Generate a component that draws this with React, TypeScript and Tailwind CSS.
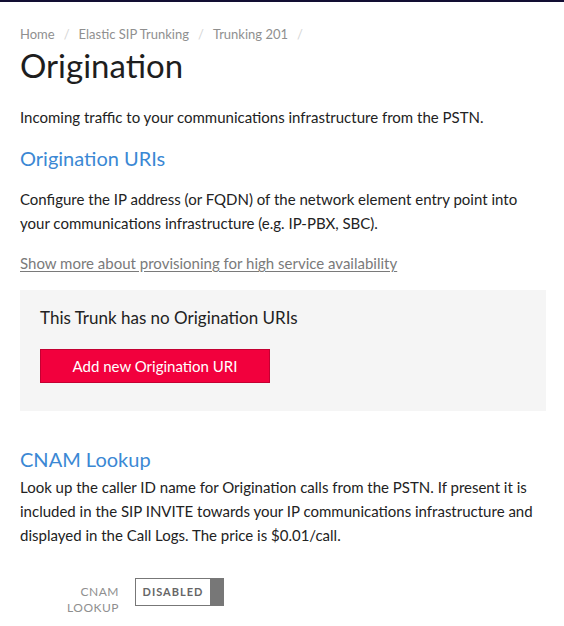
export default function App() {
  const crumbs = ['Home', 'Elastic SIP Trunking', 'Trunking 201']
  return (
    <div className="min-h-[626px] bg-white border-t-2 border-[#120e33] text-[#222] font-['Lato','Open_Sans',sans-serif]">
      <div className="px-5 pt-[22px]">
        {/* breadcrumb */}
        <nav className="flex items-center text-[13px] text-[#8f8f8f] leading-5">
          {crumbs.map((c) => (
            <span key={c} className="flex items-center">
              <span>{c}</span>
              <span className="mx-[9px] text-[#d5d5d5]">/</span>
            </span>
          ))}
        </nav>
        <h1 className="text-[33px] leading-[40px] mt-[1px] text-[#1e1e1e]">Origination</h1>

        <p className="text-[15px] leading-6 mt-[20px]">
          Incoming traffic to your communications infrastructure from the PSTN.
        </p>

        <h2 className="text-[20px] leading-7 text-[#3b88d4] mt-[15px]">Origination URIs</h2>
        <p className="text-[15px] leading-6 mt-[15px]">
          Configure the IP address (or FQDN) of the network element entry point into your
          communications infrastructure (e.g. IP-PBX, SBC).
        </p>
        <a href="#" className="block text-[15px] leading-6 mt-[16px] text-[#7a7a7a] underline underline-offset-2">
          Show more about provisioning for high service availability
        </a>

        <div className="mt-[15px] -mr-[2px] bg-[#f5f5f5] px-5 pt-[16px] pb-[28px]">
          <p className="text-[17px] leading-6">This Trunk has no Origination URIs</p>
          <button className="mt-[19px] h-[34px] w-[230px] bg-[#f2003d] border border-[#c40032] text-white text-[15px]">
            Add new Origination URI
          </button>
        </div>

        <h2 className="text-[20px] leading-7 text-[#3b88d4] mt-[34px]">CNAM Lookup</h2>
        <p className="text-[15px] leading-6 mt-[2px]">
          Look up the caller ID name for Origination calls from the PSTN. If present it is
          included in the SIP INVITE towards your IP communications infrastructure and
          displayed in the Call Logs. The price is $0.01/call.
        </p>

        <div className="flex items-start mt-[31px]">
          <div className="w-[99px] text-right text-[12px] leading-4 tracking-[0.5px] text-[#8f8f8f] pt-[6px]">
            CNAM<br />LOOKUP
          </div>
          <div className="ml-4 flex h-[28px]">
            <div className="w-[76px] border border-[#777] bg-white flex items-center justify-center text-[11px] font-bold tracking-[1px] text-[#666]">
              DISABLED
            </div>
            <div className="w-[13px] bg-[#777]" />
          </div>
        </div>
      </div>
    </div>
  )
}
